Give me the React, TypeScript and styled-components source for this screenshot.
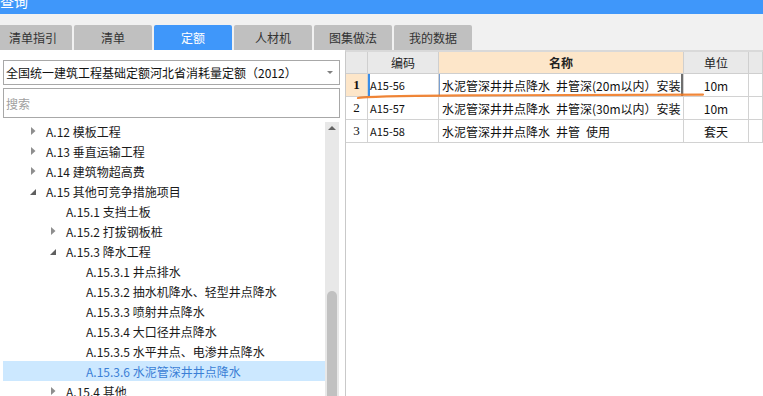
import styled, { createGlobalStyle } from "styled-components";

type NodeState = "open" | "closed" | "leaf";

interface TreeNode {
  label: string;
  level: number;
  state: NodeState;
  selected?: boolean;
}

interface QuotaRow {
  no: string;
  code: string;
  name: string;
  unit: string;
  current?: boolean;
}

const tabs = ["清单指引", "清单", "定额", "人材机", "图集做法", "我的数据"];

const tree: TreeNode[] = [
  { label: "A.12 模板工程", level: 1, state: "closed" },
  { label: "A.13 垂直运输工程", level: 1, state: "closed" },
  { label: "A.14 建筑物超高费", level: 1, state: "closed" },
  { label: "A.15 其他可竞争措施项目", level: 1, state: "open" },
  { label: "A.15.1 支挡土板", level: 2, state: "leaf" },
  { label: "A.15.2 打拔钢板桩", level: 2, state: "closed" },
  { label: "A.15.3 降水工程", level: 2, state: "open" },
  { label: "A.15.3.1 井点排水", level: 3, state: "leaf" },
  { label: "A.15.3.2 抽水机降水、轻型井点降水", level: 3, state: "leaf" },
  { label: "A.15.3.3 喷射井点降水", level: 3, state: "leaf" },
  { label: "A.15.3.4 大口径井点降水", level: 3, state: "leaf" },
  { label: "A.15.3.5 水平井点、电渗井点降水", level: 3, state: "leaf" },
  { label: "A.15.3.6 水泥管深井井点降水", level: 3, state: "leaf", selected: true },
  { label: "A.15.4 其他", level: 2, state: "closed" },
];

// en spaces keep the wide gaps of the original grid font
const rows: QuotaRow[] = [
  { no: "1", code: "A15-56", name: "水泥管深井井点降水\u2002井管深(20m以内）安装", unit: "10m", current: true },
  { no: "2", code: "A15-57", name: "水泥管深井井点降水\u2002井管深(30m以内）安装", unit: "10m" },
  { no: "3", code: "A15-58", name: "水泥管深井井点降水\u2002井管\u2002使用", unit: "套天" },
];

function Arrow({ state }: { state: NodeState }) {
  if (state === "leaf") return null;
  if (state === "open") {
    return (
      <svg width="6" height="6" viewBox="0 0 6 6">
        <polygon points="6,0 6,6 0,6" fill="#5f5f5f" />
      </svg>
    );
  }
  return (
    <svg width="5" height="8" viewBox="0 0 5 8">
      <polygon points="0,0 4.5,4 0,8" fill="#8e8e8e" />
    </svg>
  );
}

export default function App() {
  return (
    <S.Window>
      <GlobalStyle />
      <S.TitleBar>
        <S.Title>查询</S.Title>
      </S.TitleBar>

      <S.TabStrip>
        {tabs.map((t, i) => (
          <S.Tab key={t} $active={i === 2}>
            {t}
          </S.Tab>
        ))}
      </S.TabStrip>

      <S.Main>
        <S.LeftPanel>
          <S.Select>
            <span>全国统一建筑工程基础定额河北省消耗量定额（2012）</span>
            <S.Caret />
          </S.Select>
          <S.Search placeholder="搜索" />

          <S.TreeArea>
            <S.TreeList>
              {tree.map((n) => (
                <S.TreeRow key={n.label} $level={n.level} $selected={n.selected}>
                  <S.ArrowBox $open={n.state === "open"}>
                    <Arrow state={n.state} />
                  </S.ArrowBox>
                  {n.label}
                </S.TreeRow>
              ))}
            </S.TreeList>
            <S.Scrollbar>
              <S.ScrollUp />
              <S.Thumb />
            </S.Scrollbar>
          </S.TreeArea>
        </S.LeftPanel>

        <S.RightPanel>
          <S.Grid>
            <S.HeadCell />
            <S.HeadCell>编码</S.HeadCell>
            <S.HeadCell $accent>名称</S.HeadCell>
            <S.HeadCell>单位</S.HeadCell>
            <S.HeadCell />

            {rows.map((r) => [
              <S.IndexCell key={r.no + "i"} $current={r.current}>
                {r.no}
              </S.IndexCell>,
              <S.CodeCell key={r.no + "c"} $current={r.current}>
                {r.code}
              </S.CodeCell>,
              <S.NameCell key={r.no + "n"} $current={r.current}>
                {r.name}
              </S.NameCell>,
              <S.UnitCell key={r.no + "u"}>{r.unit}</S.UnitCell>,
              <S.Cell key={r.no + "e"} />,
            ])}
          </S.Grid>

          {/* hand drawn mark under the first row */}
          <S.Mark width="400" height="60" viewBox="0 0 400 60">
            <path
              d="M13 48 Q 30 45.8 120 45.4 T 358 44.6"
              fill="none"
              stroke="#f07a24"
              strokeWidth="2.2"
              strokeLinecap="round"
              opacity="0.9"
            />
          </S.Mark>
        </S.RightPanel>
      </S.Main>
    </S.Window>
  );
}

const GlobalStyle = createGlobalStyle`
  html, body {
    margin: 0;
    padding: 0;
    background: #fff;
    overflow: hidden;
  }
  body {
    font-family: "Noto Sans CJK SC", "Noto Sans", sans-serif;
    font-size: 12px;
    color: #1a1a1a;
  }
  * { box-sizing: border-box; }
`;

const S = {
  Window: styled.div`
    width: 763px;
    height: 396px;
    display: flex;
    flex-direction: column;
    overflow: hidden;
  `,

  TitleBar: styled.div`
    height: 14px;
    flex: none;
    background: #3f97fa;
    overflow: hidden;
  `,
  Title: styled.div`
    color: #fff;
    font-size: 14px;
    line-height: 14px;
    margin-top: -6px;
  `,

  TabStrip: styled.div`
    height: 36px;
    flex: none;
    background: #f1f1f1;
    display: flex;
    align-items: flex-end;
    gap: 2px;
    margin-left: -6px;
  `,
  Tab: styled.div<{ $active?: boolean }>`
    width: 78px;
    height: 25px;
    border-radius: 2px 2px 0 0;
    display: flex;
    align-items: center;
    justify-content: center;
    font-size: 12px;
    background: ${(p) => (p.$active ? "#3f97fa" : "#c0c0c0")};
    color: ${(p) => (p.$active ? "#fff" : "#333")};
  `,

  Main: styled.div`
    flex: 1;
    display: flex;
    min-height: 0;
  `,

  LeftPanel: styled.div`
    width: 345px;
    flex: none;
    padding: 10px 0 0 3px;
    display: flex;
    flex-direction: column;
    overflow: hidden;
  `,
  Select: styled.div`
    width: 337px;
    height: 25px;
    flex: none;
    border: 1px solid #a8a8a8;
    display: flex;
    align-items: center;
    justify-content: space-between;
    padding: 0 6px 0 2px;
    font-size: 12px;
    color: #111;
    white-space: nowrap;
  `,
  Caret: styled.span`
    width: 0;
    height: 0;
    border-left: 3px solid transparent;
    border-right: 3px solid transparent;
    border-top: 3px solid #808080;
  `,
  Search: styled.input`
    width: 337px;
    height: 30px;
    flex: none;
    margin-top: 3px;
    border: 1px solid #a8a8a8;
    padding: 0 2px;
    font-family: "Noto Sans CJK SC", sans-serif;
    font-size: 12px;
    outline: none;
    &::placeholder {
      color: #a0a0a0;
    }
  `,

  TreeArea: styled.div`
    flex: 1;
    display: flex;
    margin-top: 3px;
    min-height: 0;
  `,
  TreeList: styled.div`
    width: 322px;
    flex: none;
  `,
  TreeRow: styled.div<{ $level: number; $selected?: boolean }>`
    height: 20px;
    display: flex;
    align-items: center;
    white-space: nowrap;
    padding-left: ${(p) => 23 + (p.$level - 1) * 20}px;
    background: ${(p) => (p.$selected ? "#cce8ff" : "transparent")};
    color: ${(p) => (p.$selected ? "#3b7fd6" : "#1a1a1a")};
  `,
  ArrowBox: styled.span<{ $open?: boolean }>`
    width: 20px;
    flex: none;
    display: flex;
    align-items: center;
    padding-left: ${(p) => (p.$open ? 4 : 5)}px;
    padding-top: ${(p) => (p.$open ? 2 : 0)}px;
  `,

  Scrollbar: styled.div`
    width: 14px;
    flex: none;
    margin-top: 1px;
    background: #e8e8e8;
    display: flex;
    flex-direction: column;
    align-items: center;
  `,
  ScrollUp: styled.span`
    margin-top: 4px;
    width: 0;
    height: 0;
    border-left: 4px solid transparent;
    border-right: 4px solid transparent;
    border-bottom: 4px solid #646464;
  `,
  Thumb: styled.span`
    margin-top: 161px;
    width: 10px;
    height: 200px;
    flex: none;
    border-radius: 5px 5px 0 0;
    background: #c1c1c1;
  `,

  RightPanel: styled.div`
    flex: 1;
    position: relative;
    border-top: 2px solid #d9d9d9;
    border-left: 1px solid #c9c9c9;
  `,
  Grid: styled.div`
    display: grid;
    grid-template-columns: 22px 71px 245px 65px 1fr;
    grid-template-rows: 22px repeat(3, 23px);
  `,
  Cell: styled.div`
    border-right: 1px solid #d2d2d2;
    border-bottom: 1px solid #d2d2d2;
  `,
  HeadCell: styled.div<{ $accent?: boolean }>`
    border-right: 1px solid #cfcfcf;
    border-bottom: 1px solid #cfcfcf;
    display: flex;
    align-items: center;
    justify-content: center;
    font-size: 12px;
    color: #222;
    background: ${(p) => (p.$accent ? "#fde6c9" : "#e9e9e9")};
    font-weight: ${(p) => (p.$accent ? 700 : 400)};
  `,
  IndexCell: styled.div<{ $current?: boolean }>`
    border-right: 1px solid #d2d2d2;
    border-bottom: 1px solid #d2d2d2;
    display: flex;
    align-items: center;
    justify-content: center;
    font-family: "Liberation Serif", serif;
    font-size: 13px;
    background: ${(p) => (p.$current ? "#fde6c9" : "#fff")};
    font-weight: ${(p) => (p.$current ? 700 : 400)};
    color: #111;
  `,
  CodeCell: styled.div<{ $current?: boolean }>`
    border-right: 1px solid #d2d2d2;
    border-bottom: 1px solid #d2d2d2;
    display: flex;
    align-items: center;
    padding-left: 2px;
    font-size: 11px;
    color: #111;
    box-shadow: ${(p) => (p.$current ? "inset 2px 0 0 #3a8ee8" : "none")};
  `,
  NameCell: styled.div<{ $current?: boolean }>`
    border-right: 1px solid #d2d2d2;
    border-bottom: 1px solid #d2d2d2;
    display: flex;
    align-items: center;
    padding-left: 3px;
    white-space: nowrap;
    overflow: hidden;
    font-size: 12px;
    color: #111;
    box-shadow: ${(p) =>
      p.$current ? "inset 1px 0 0 #7a9fd0, inset -2px 0 0 #6f6f6f" : "none"};
  `,
  UnitCell: styled.div`
    border-right: 1px solid #d2d2d2;
    border-bottom: 1px solid #d2d2d2;
    display: flex;
    align-items: center;
    justify-content: center;
    font-size: 12px;
    color: #111;
  `,
  Mark: styled.svg`
    position: absolute;
    left: -1px;
    top: -2px;
    pointer-events: none;
  `,
};
